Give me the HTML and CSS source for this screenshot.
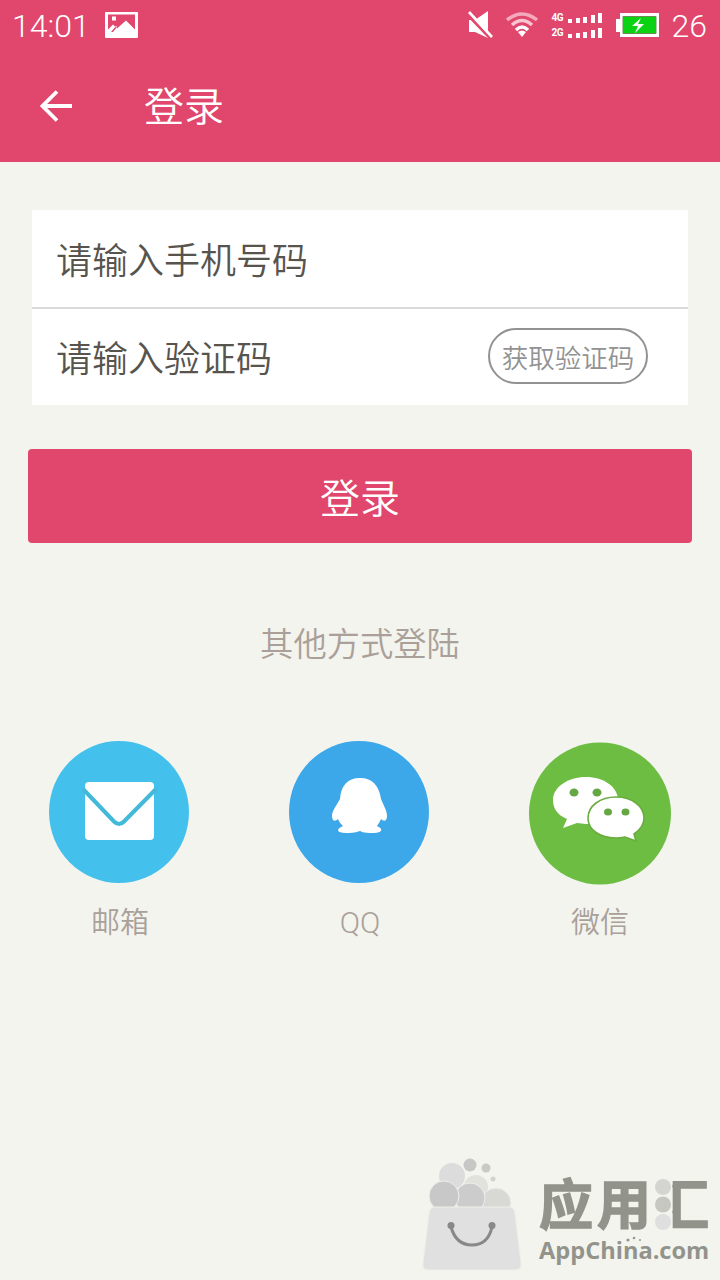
FILE: index.html
```html
<!DOCTYPE html>
<html lang="zh-CN">
<head>
<meta charset="utf-8">
<title>登录</title>
<link rel="stylesheet" href="styles.css">
</head>
<body>
<main class="screen">
  <header class="header">
    <div class="status">
      <span class="clock">14:01</span>
      <svg class="picture" width="33" height="26" viewBox="0 0 33 26"><path fill="#fff" fill-rule="evenodd" d="M1 0h31q1 0 1 1v24q0 1-1 1H1q-1 0-1-1V1Q0 0 1 0ZM3 2.500v15l5-5 4 4 9-8 9 9V2.500ZM7 4.500h4v4H7ZM6 20l2 0 4-5-1-1Z"/></svg>
      <span class="spacer"></span>
      <svg class="mute" width="26" height="28" viewBox="0 0 26 28"><path fill="#fff" d="M1 9h6L20 0v27L7 21H1Z"/><path d="M0 4l24 25" stroke="#e1466c" stroke-width="3"/><path d="M1 1l23 25" stroke="#fff" stroke-width="2.600"/></svg>
      <svg class="wifi" width="32" height="26" viewBox="0 0 32 26" fill="none" stroke-width="3.5"><path stroke="#f5a9bd" d="M1 8Q16-4 31 8"/><path stroke="#f9c3d0" d="M6 13Q16 4 26 13"/><path stroke="#fff" d="M10 18Q16 12 22 18"/><path fill="#fff" d="M12 20q4-3 8 0l-4 5Z"/></svg>
      <div class="signals">
        <div class="signal"><span>4G</span><svg width="36" height="10" viewBox="0 0 36 10" fill="#fff"><path d="M1 6h4v4H1ZM9 5h4v5H9ZM16 4h4v6h-4ZM24 2h4v8h-4ZM31 0h4v10h-4Z"/></svg></div>
        <div class="signal"><span>2G</span><svg width="36" height="10" viewBox="0 0 36 10" fill="#fff"><path d="M1 6h4v4H1ZM9 5h4v5H9ZM16 4h4v6h-4ZM24 2h4v8h-4ZM31 0h4v10h-4Z"/></svg></div>
      </div>
      <svg class="battery" width="43" height="24" viewBox="0 0 43 24"><path fill="#fff" d="M4 0h39v24H4v-5H0V6h4Z"/><path fill="#0bd313" stroke="#6e8d55" d="M7 3.500h33v17H7Z"/><path fill="#fff" d="M25 5l-9 8h6l-3 7 9-9h-6Z"/></svg>
      <span class="percent">26</span>
    </div>
    <nav class="toolbar">
      <svg class="back" width="32" height="32" viewBox="0 0 32 32" fill="none" stroke="#fff" stroke-width="3.800"><path d="M32 16H3M17 1.500L2.500 16 17 30.500"/></svg>
      <h1 class="title">登录</h1>
    </nav>
  </header>

  <form class="form">
    <div class="field">请输入手机号码</div>
    <div class="field field-code"><span>请输入验证码</span><button class="code" type="button">获取验证码</button></div>
  </form>
  <button class="submit" type="button">登录</button>

  <p class="other">其他方式登陆</p>
  <section class="methods">
    <div class="method">
      <svg width="144" height="146" viewBox="0 0 144 146"><ellipse cx="71" cy="73" rx="70" ry="71" fill="#44c0ec"/><rect x="37" y="43" width="69" height="58" rx="4" fill="#fff"/><path d="M35 50L66 82.500q5 5 10 0l32-32.500" fill="none" stroke="#42b9d8" stroke-width="4"/></svg>
      <span>邮箱</span>
    </div>
    <div class="method">
      <svg width="144" height="146" viewBox="0 0 144 146"><ellipse cx="71" cy="73" rx="70" ry="71" fill="#3ca7e9"/><path fill="#fff" d="M52 60C53 47 59 39 72 39s19 8 21 21c3 7 6 12 6 17 0 5-3 6-6 3-1 3-3 5-4 7 7 3 5 7-3 7-6 0-10 0-14-2-6 2-10 2-14 2-10 0-10-4-3-7-2-2-4-4-5-7-3 3-6 2-6-3 0-5 4-10 8-17Z"/></svg>
      <span class="latin">QQ</span>
    </div>
    <div class="method">
      <svg width="144" height="146" viewBox="0 0 144 146"><circle cx="72" cy="74.500" r="71" fill="#6dbd43"/><path fill="#fff" d="M58 38c18 0 32 10 32 23S77 85 58 85l-9-1-14 5 4-9C29 76 25 69 25 61c0-13 15-23 33-23Z"/><path fill="#fff" stroke="#6aac40" stroke-width="1.600" d="M88 58c16 0 28 9 28 21 0 7-4 12-10 16l2 7-11-4q-5 1-9 1C72 99 60 91 60 79s12-21 28-21Z"/><g fill="#65a743"><ellipse cx="46" cy="53.500" rx="4.500" ry="4"/><ellipse cx="69" cy="53.500" rx="4.500" ry="4"/><ellipse cx="80" cy="73" rx="4" ry="3.500"/><ellipse cx="97.500" cy="73" rx="4" ry="3.500"/></g></svg>
      <span>微信</span>
    </div>
  </section>

  <footer class="brand">
    <svg class="bag" width="102" height="114" viewBox="0 0 102 114"><circle cx="31" cy="18" r="13" fill="#dcdcdc"/><circle cx="55" cy="29" r="12" fill="#e1e2db"/><circle cx="49" cy="7" r="6.500" fill="#c7c7c5"/><circle cx="65" cy="10" r="4.500" fill="#c9cac6"/><circle cx="72" cy="21" r="2.500" fill="#d2d3ce"/><g stroke="#efefeb"><circle cx="75" cy="45" r="15" fill="#d8d9d4"/><circle cx="49" cy="40" r="15" fill="#ccc"/><circle cx="23" cy="38" r="15" fill="#c8c8c8"/></g><path fill="#e0e0e0" stroke="#eeeee9" d="M13 49h76q4 0 5 7l6 49q1 7-6 7H7q-6 0-5-7l6-49q1-7 5-7Z"/><path d="M30 69q5 18 21 18t20-18" fill="none" stroke="#888" stroke-width="3"/><circle cx="30" cy="67.500" r="3.500" fill="#888"/><circle cx="71" cy="67.500" r="3.500" fill="#888"/></svg>
    <div class="wordmark">
      <div class="name"><span>应</span><span>用</span><span class="hui">汇</span>
        <svg class="dots" width="16" height="54" viewBox="0 0 16 54"><circle cx="8" cy="9" r="8" fill="#d4d5d0"/><circle cx="8" cy="26.500" r="8" fill="#c6c7c0"/><circle cx="8" cy="44" r="8" fill="#dfdfdf"/></svg>
      </div>
      <div class="site">AppChina.com<svg class="sparks" width="18" height="6" viewBox="0 0 18 6" fill="#96978f"><circle cx="3" cy="4" r="1.600"/><circle cx="9" cy="2" r="1.300"/><circle cx="15" cy="4" r="1"/></svg></div>
    </div>
  </footer>
</main>
</body>
</html>
```
FILE: styles.css
```css
* { box-sizing: border-box; }
body { margin: 0; }
svg { display: block; flex: none; }
button { font: inherit; }
.screen {
  width: 720px;
  height: 1280px;
  overflow: hidden;
  display: flex;
  flex-direction: column;
  background: #f3f4ee;
  font-family: Roboto, "Noto Sans CJK SC DemiLight", "Noto Sans CJK SC", sans-serif;
  font-weight: 350;
}
.header { height: 162px; background: #e1466c; color: #fff; }
.status { height: 50px; padding: 0 13px 0 12px; display: flex; align-items: center; }
.clock, .percent { font-size: 32px; line-height: 50px; padding-top: 2px; font-weight: 300; }
.clock { width: 93px; }
.spacer { flex: 1; }
.wifi { margin-left: 12px; }
.signals { margin-left: 14px; display: flex; flex-direction: column; gap: 5px; }
.signal { display: flex; align-items: center; }
.signal span { width: 15px; font: bold 10px/10px Roboto, sans-serif; letter-spacing: -0.5px; }
.battery { margin-left: 13px; }
.percent { margin-left: 13px; }
.toolbar { height: 112px; padding-left: 40px; display: flex; align-items: center; }
.title { margin: 4px 0 0 72px; font-size: 40px; line-height: 60px; font-weight: 350; }
.form { margin: 48px 32px 0; height: 195px; background: #fff; }
.field {
  height: 99px;
  padding: 0 40px 2px 24px;
  display: flex;
  align-items: center;
  justify-content: space-between;
  border-bottom: 2px solid #dadad8;
  color: #57544e;
  font-size: 36px;
}
.field-code { height: 96px; border: 0; }
.code {
  width: 160px;
  height: 56px;
  padding: 0;
  border: 2px solid #929292;
  border-radius: 28px;
  background: #fff;
  color: #929292;
  font-size: 26.500px;
}
.submit {
  margin: 44px 28px 0;
  height: 94px;
  padding: 0;
  border: 0;
  border-radius: 4px;
  background: #e1466c;
  color: #fff;
  font-size: 40px;
}
.other { margin: 77px 0 0; height: 50px; line-height: 50px; text-align: center; color: #aaa099; font-size: 33.300px; }
.methods { margin: 69px 48px 0; display: flex; justify-content: space-between; }
.method { width: 144px; display: flex; flex-direction: column; align-items: center; color: #aaa099; font-size: 29px; line-height: 40px; }
.method span { margin-top: 18px; }
.method .latin { font-weight: 300; font-size: 30px; }
.brand { margin-top: auto; padding: 0 8px 8px 421px; display: flex; align-items: flex-end; color: #92938b; }
.wordmark { margin: 0 0 10px 16px; display: flex; flex-direction: column; gap: 7px; }
.name { position: relative; height: 56px; display: flex; gap: 4px; font: 700 54px/54px "Noto Sans CJK SC", sans-serif; -webkit-text-stroke: 1.500px #92938b; }
.hui { clip-path: inset(-4px -4px -4px 32%); }
.dots { position: absolute; left: 116px; top: 3px; }
.site { position: relative; font: bold 23.600px/24px "Open Sans", sans-serif; white-space: nowrap; }
.sparks { position: absolute; left: 86px; top: -2px; }
```
